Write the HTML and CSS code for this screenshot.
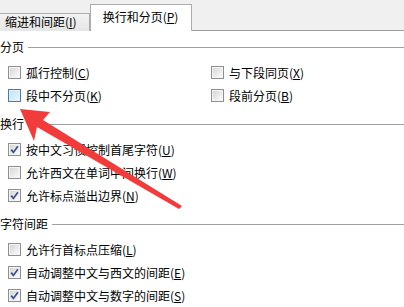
FILE: index.html
```html
<!DOCTYPE html>
<html lang="zh-CN">
<head>
<meta charset="utf-8">
<link rel="stylesheet" href="styles.css">
</head>
<body>
<div class="tabs">
  <div class="tab">缩进和间距(<u>I</u>)</div>
  <div class="tab active">换行和分页(<u>P</u>)</div>
</div>
<div class="content">
  <section class="group">
    <div class="heading"><span>分页</span><i></i></div>
    <div class="grid">
      <label class="row"><span class="cb"></span>孤行控制(<u>C</u>)</label>
      <label class="row"><span class="cb"></span>与下段同页(<u>X</u>)</label>
      <label class="row"><span class="cb hover"></span>段中不分页(<u>K</u>)</label>
      <label class="row"><span class="cb"></span>段前分页(<u>B</u>)</label>
    </div>
  </section>
  <section class="group">
    <div class="heading"><span>换行</span><i></i></div>
    <label class="row"><span class="cb checked"><svg viewBox="0 0 11 11" width="11" height="11"><path d="M2.2 5.6 L4.4 8.4 L8.9 2.2" fill="none" stroke="#3d4f8f" stroke-width="1.7"/></svg></span>按中文习惯控制首尾字符(<u>U</u>)</label>
    <label class="row"><span class="cb"></span>允许西文在单词中间换行(<u>W</u>)</label>
    <label class="row"><span class="cb checked"><svg viewBox="0 0 11 11" width="11" height="11"><path d="M2.2 5.6 L4.4 8.4 L8.9 2.2" fill="none" stroke="#3d4f8f" stroke-width="1.7"/></svg></span>允许标点溢出边界(<u>N</u>)</label>
  </section>
  <section class="group">
    <div class="heading"><span>字符间距</span><i></i></div>
    <label class="row"><span class="cb"></span>允许行首标点压缩(<u>L</u>)</label>
    <label class="row"><span class="cb checked"><svg viewBox="0 0 11 11" width="11" height="11"><path d="M2.2 5.6 L4.4 8.4 L8.9 2.2" fill="none" stroke="#3d4f8f" stroke-width="1.7"/></svg></span>自动调整中文与西文的间距(<u>E</u>)</label>
    <label class="row"><span class="cb checked"><svg viewBox="0 0 11 11" width="11" height="11"><path d="M2.2 5.6 L4.4 8.4 L8.9 2.2" fill="none" stroke="#3d4f8f" stroke-width="1.7"/></svg></span>自动调整中文与数字的间距(<u>S</u>)</label>
  </section>
</div>
<svg class="arrow" width="404" height="307" viewBox="0 0 404 307">
  <polygon points="20,109 50,112 43,120 182,206 179,209 37,127 34,141" fill="#f23b3b"/>
</svg>
</body>
</html>
```

FILE: styles.css
```css
* { box-sizing: border-box; }
html, body {
  margin: 0;
  padding: 0;
  background: #fff;
  width: 404px;
  height: 307px;
  overflow: hidden;
  font-family: "Noto Sans CJK SC", "Noto Sans", sans-serif;
  font-size: 12px;
  color: #000;
}
u { text-decoration: underline; text-underline-offset: 1px; }

.tabs {
  height: 31px;
  background: #f0f0f0;
  border-bottom: 1px solid #a0a0a0;
  display: flex;
  align-items: flex-end;
  padding-left: 0;
}
.tab {
  height: 18px;
  margin-bottom: -1px;
  margin-left: -9px;
  padding: 0 12px 0 13px;
  line-height: 16px;
  border: 1px solid #acacac;
  border-bottom: none;
  background: linear-gradient(#f2f2f2, #e6e6e6);
  white-space: nowrap;
}
.tab.active {
  margin-left: 0;
  height: 26px;
  padding: 4px 13px 0 12px;
  background: #fff;
  border-left: 1px solid #acacac;
  position: relative;
  z-index: 1;
  height: 27px;
}

.content {
  padding-top: 8px;
}
.group + .group { margin-top: 9px; }
.heading {
  height: 16px;
  display: flex;
  align-items: center;
  line-height: 16px;
  margin-bottom: 6px;
}
.heading i {
  flex: 1;
  height: 1px;
  background: #a0a0a0;
  margin-left: 4px;
}
.grid {
  display: grid;
  grid-template-columns: 203px 1fr;
}
.row {
  height: 23px;
  display: flex;
  align-items: center;
  padding-left: 8px;
  white-space: nowrap;
  line-height: 16px;
}
.cb {
  width: 13px;
  height: 13px;
  margin-right: 5px;
  flex: none;
  border: 1px solid #8e8f8f;
  background: linear-gradient(135deg, #d2d2d2, #f6f6f6 80%, #fff);
  box-shadow: inset 0 0 0 1px #f4f4f4;
  display: flex;
  align-items: center;
  justify-content: center;
}
.cb.hover {
  border-color: #3c7fb1;
  background: linear-gradient(135deg, #bfe2f8, #e9f7fe);
  box-shadow: inset 0 0 0 1px #def1fc;
}
.cb svg { display: block; }

.arrow {
  position: absolute;
  left: 0;
  top: 0;
  pointer-events: none;
}
```
